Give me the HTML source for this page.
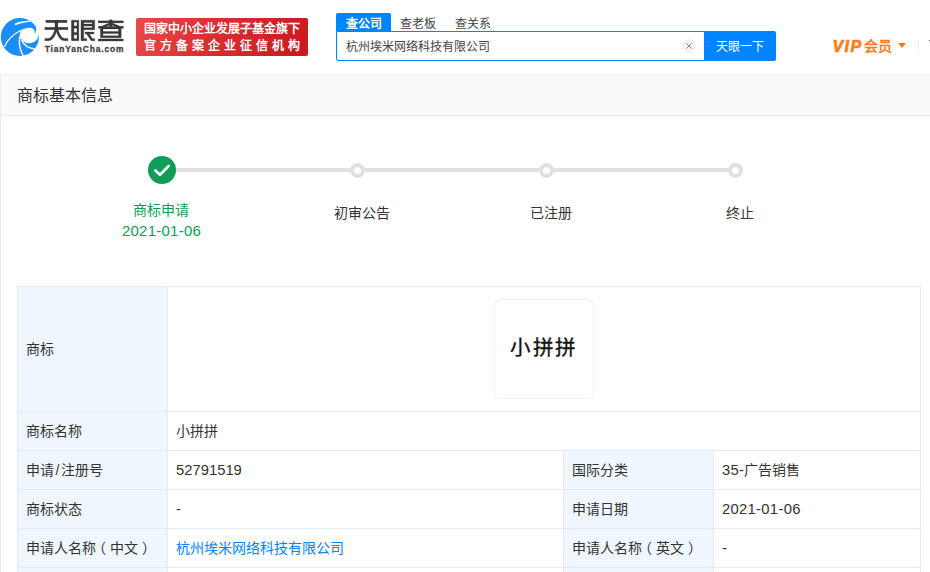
<!DOCTYPE html>
<html lang="zh-CN">
<head>
<meta charset="utf-8">
<title>商标基本信息</title>
<style>
*{box-sizing:border-box;margin:0;padding:0}
html,body{width:930px;height:572px;overflow:hidden;background:#fff}
body{font-family:"Liberation Sans",sans-serif;color:#333;font-size:14px;position:relative}
.abs{position:absolute}
/* header */
#hdr{position:absolute;left:0;top:0;width:930px;height:74px;background:#fff;box-shadow:0 1px 2px rgba(0,0,0,.045);z-index:2}
#logo{position:absolute;left:0;top:0}
#banner{position:absolute;left:136px;top:18px;width:172px;height:38px;border-radius:2px;background:linear-gradient(115deg,#e84a4a 0%,#dc3034 40%,#c9181f 100%);color:#fff;font-weight:bold;font-size:12px;line-height:17px;white-space:nowrap}
#banner div{position:absolute;left:7.5px}
#banner .l1{top:2.5px}
#banner .l2{top:20px;letter-spacing:4px}
.tab{position:absolute;top:13px;height:18px;line-height:23px;font-size:12px;color:#444;white-space:nowrap}
#tab1{left:336px;width:55px;background:#0084ff;color:#fff;text-align:center;font-weight:bold;border-radius:2px 2px 0 0}
#tab2{left:400px}
#tab3{left:455px}
#sbox{position:absolute;left:336px;top:31px;width:370px;height:30px;border:1px solid #0084ff;border-radius:0 0 0 2px;background:#fff;font-size:12px;line-height:30px;padding-left:9px;color:#444;white-space:nowrap}
#clr{position:absolute;left:682px;top:39px;width:14px;height:14px;border-radius:50%;background:#f3f3f3}
#sbtn{position:absolute;left:704px;top:31px;width:72px;height:30px;background:#0084ff;color:#fff;font-size:12px;line-height:32px;text-align:center;padding-right:1px;border-radius:0 2px 2px 0;white-space:nowrap}
#vip{position:absolute;left:833px;top:36px;height:20px;line-height:20px;font-size:14px;font-weight:bold;color:#fd7c1a;white-space:nowrap}
#vip i{font-style:italic;font-size:16px;letter-spacing:1.4px;-webkit-text-stroke:0.7px #fd7c1a;margin-right:1.5px;margin-left:-0.5px;position:relative;top:0.8px}
#vtri{position:absolute;left:897.5px;top:43px;width:0;height:0;border-left:4.5px solid transparent;border-right:4.5px solid transparent;border-top:5.5px solid #fd7c1a}
#vdiv{position:absolute;left:918px;top:39px;width:1px;height:14px;background:#ececec}
#vdot{position:absolute;left:929px;top:39.7px;width:1px;height:1.6px;background:#555}
/* page */
#lbar{position:absolute;left:0;top:74px;width:1px;height:498px;background:#ebebeb}
#sect{position:absolute;left:1px;top:74px;width:929px;height:42px;background:#fafafa;border-bottom:1px solid #ededed;font-size:16px;line-height:43px;padding-left:16px;color:#333}
/* steps */
#line{position:absolute;left:170px;top:168px;width:565px;height:4px;background:#e0e0e0}
.dot{position:absolute;top:162.5px;width:15px;height:15px;border-radius:50%;border:4px solid #e0e0e0;background:#fff}
#ok{position:absolute;left:147.5px;top:156.2px;width:28px;height:28px;border-radius:50%;background:#0f9d58}
.lab{position:absolute;width:120px;text-align:center;font-size:14px;line-height:20px;color:#333;white-space:nowrap}
.lab.g{color:#0f9d58}
.lab.num{font-size:15px;letter-spacing:0.25px}
/* table */
#tbl{position:absolute;left:17px;top:286px;width:903px;line-height:20px;border-collapse:collapse;table-layout:fixed;font-size:14px;color:#333}
#tbl td{border:1px solid #e2ecf7;height:39px;padding:0 8px;vertical-align:middle;white-space:nowrap;overflow:hidden}
#tbl td.k{background:#eff6fe}
#tbl tr.big td{height:125px;padding-bottom:0}
#tbl tr.big td.k{padding-bottom:1px}
#tm{width:100px;height:100px;border:1px solid #f1f1f1;border-radius:6px;margin:0 auto;position:relative;text-align:center;line-height:95px;font-size:20.5px;font-weight:500;color:#111;letter-spacing:2.8px;-webkit-text-stroke:0.35px #111}
a{color:#0084ff;text-decoration:none}
.n{font-size:14.8px}
.n.d{letter-spacing:0.3px}
.pl{position:relative;left:-4px}
.pr{position:relative;left:4px}
.sl{padding:0 1.4px}
</style>
</head>
<body>
<div id="hdr">
  <svg id="logo" width="130" height="74" viewBox="0 0 130 74">
    <circle cx="19.85" cy="37" r="19" fill="#1b8eff"/>
    <g fill="#fff" stroke="none">
      <path d="M21.3,30.3 C24,28.3 28,27.3 31,27.9 C34,28.6 35.6,31 34.4,34 C36,32 36.6,30 36,27.7 L42,26 L42,35.6 L38.5,35.2 C38.2,39.5 34.5,43.2 29.4,43.2 C25.4,43.2 22.2,41.4 20.9,38.4 L19.6,38 C19.4,35 20,32.5 21.3,30.3 Z"/>
      <path d="M14.6,23.8 C19.5,21.6 25,20.7 30.1,20.9 L30.3,21.7 C25,22.1 20,23.2 15.1,25.3 Z"/>
    </g>
    <g fill="none" stroke="#fff" stroke-linecap="butt">
      <path d="M4.3,46.6 C7.5,40 13.5,34 21.6,30" stroke-width="1.3"/>
      <path d="M19.9,37 C18.6,43 19.9,50 23.2,56" stroke-width="1.5"/>
      <path d="M21.6,40.2 C24,45.5 28.5,48 34.6,48.9" stroke-width="1.5"/>
    </g>
    <g fill="#3b3636" stroke="#3b3636" stroke-width="0.35">
      <!-- tian -->
      <rect x="45.9" y="20.2" width="21.1" height="2.4"/>
      <rect x="44.9" y="27.3" width="23" height="2.4"/>
      <rect x="55" y="20.2" width="2.9" height="9"/>
      <path d="M55,29 C53.6,33.5 51.6,38.4 48.2,38.4 L44.9,38.4 L44.9,40.7 L48.6,40.7 C53.2,40.7 55.4,35 56.45,31.6 C57.5,35 59.7,40.7 64.3,40.7 L67.9,40.7 L67.9,38.4 L64.7,38.4 C61.3,38.4 59.3,33.5 57.9,29 Z"/>
      <!-- yan left -->
      <path fill-rule="evenodd" d="M72.2,20.2 H78.8 V40.7 H72.2 Q71.4,40.7 71.4,39.9 V21 Q71.4,20.2 72.2,20.2 Z M73.9,22.1 V26 H77 V22.1 Z M73.9,28.2 V32.4 H77 V28.2 Z M73.9,34.8 V38.7 H77 V34.8 Z"/>
      <!-- yan right -->
      <path fill-rule="evenodd" d="M81,20.2 H94.7 V29.7 H83.7 V38.7 H86.8 V40.7 H81 Z M83.7,22.4 V24.1 H92.2 V22.4 Z M83.7,26 V27.7 H92.2 V26 Z"/>
      <path d="M85.1,32.1 H93.9 V33.9 H89.3 L92.5,38.7 H94.7 V40.7 H91.2 L86.6,33.9 H85.1 Z"/>
      <!-- cha -->
      <rect x="98.2" y="20.9" width="25.2" height="2"/>
      <rect x="109.4" y="19.9" width="2.7" height="6.6"/>
      <path d="M109.4,22.9 L101.5,26.3 H98.3 V28.2 H102.2 L110.75,24.4 L119.3,28.2 H123.4 V26.3 H120 L112.1,22.9 Z"/>
      <path fill-rule="evenodd" d="M100.4,26.5 H121.2 V37.8 H100.4 Z M103,28.9 V31.6 H118.5 V28.9 Z M103,33.4 V35.8 H118.5 V33.4 Z"/>
      <rect x="98.2" y="39" width="25" height="2"/>
    </g>
    <text x="44.7" y="52.2" font-family="Liberation Sans, sans-serif" font-weight="bold" font-size="8.4" fill="#464141" stroke="#464141" stroke-width="0.3" textLength="78.8" lengthAdjust="spacing">TianYanCha.com</text>
  </svg>
  <div id="banner"><div class="l1">国家中小企业发展子基金旗下</div><div class="l2">官方备案企业征信机构</div></div>
  <div class="tab" id="tab1">查公司</div>
  <div class="tab" id="tab2">查老板</div>
  <div class="tab" id="tab3">查关系</div>
  <div id="sbox">杭州埃米网络科技有限公司</div>
  <div id="clr"><svg width="14" height="14" viewBox="0 0 14 14"><path d="M4.4 4.4 L9.6 9.6 M9.6 4.4 L4.4 9.6" stroke="#8a8a8a" stroke-width="1" fill="none"/></svg></div>
  <div id="sbtn">天眼一下</div>
  <div id="vip"><i>VIP</i>会员</div>
  <div id="vtri"></div>
  <div id="vdiv"></div>
  <div id="vdot"></div>
</div>
<div id="lbar"></div>
<div id="sect">商标基本信息</div>

<div id="line"></div>
<div id="ok"><svg width="28" height="28" viewBox="0 0 28 28"><path d="M7.4 14.4 L12 18.8 L20.8 9.9" fill="none" stroke="#fff" stroke-width="2.7" stroke-linecap="round" stroke-linejoin="round"/></svg></div>
<div class="dot" style="left:349.5px"></div>
<div class="dot" style="left:538.5px"></div>
<div class="dot" style="left:727.5px"></div>
<div class="lab g" style="left:101px;top:200px">商标申请</div>
<div class="lab g num" style="left:101.5px;top:221px">2021-01-06</div>
<div class="lab" style="left:302px;top:203px">初审公告</div>
<div class="lab" style="left:491px;top:203px">已注册</div>
<div class="lab" style="left:680px;top:203px">终止</div>

<table id="tbl">
  <colgroup><col style="width:150px"><col style="width:396px"><col style="width:150px"><col style="width:207px"></colgroup>
  <tr class="big"><td class="k">商标</td><td colspan="3"><div id="tm">小拼拼</div></td></tr>
  <tr><td class="k">商标名称</td><td colspan="3">小拼拼</td></tr>
  <tr><td class="k">申请<span class="sl">/</span>注册号</td><td><span class="n">52791519</span></td><td class="k">国际分类</td><td><span class="n d">35-</span>广告销售</td></tr>
  <tr><td class="k">商标状态</td><td><span class="n">-</span></td><td class="k">申请日期</td><td><span class="n d">2021-01-06</span></td></tr>
  <tr><td class="k">申请人名称<span class="pl">（</span>中文<span class="pr">）</span></td><td><a>杭州埃米网络科技有限公司</a></td><td class="k">申请人名称<span class="pl">（</span>英文<span class="pr">）</span></td><td><span class="n">-</span></td></tr>
  <tr><td class="k">&nbsp;</td><td>&nbsp;</td><td class="k">&nbsp;</td><td>&nbsp;</td></tr>
</table>
</body>
</html>
